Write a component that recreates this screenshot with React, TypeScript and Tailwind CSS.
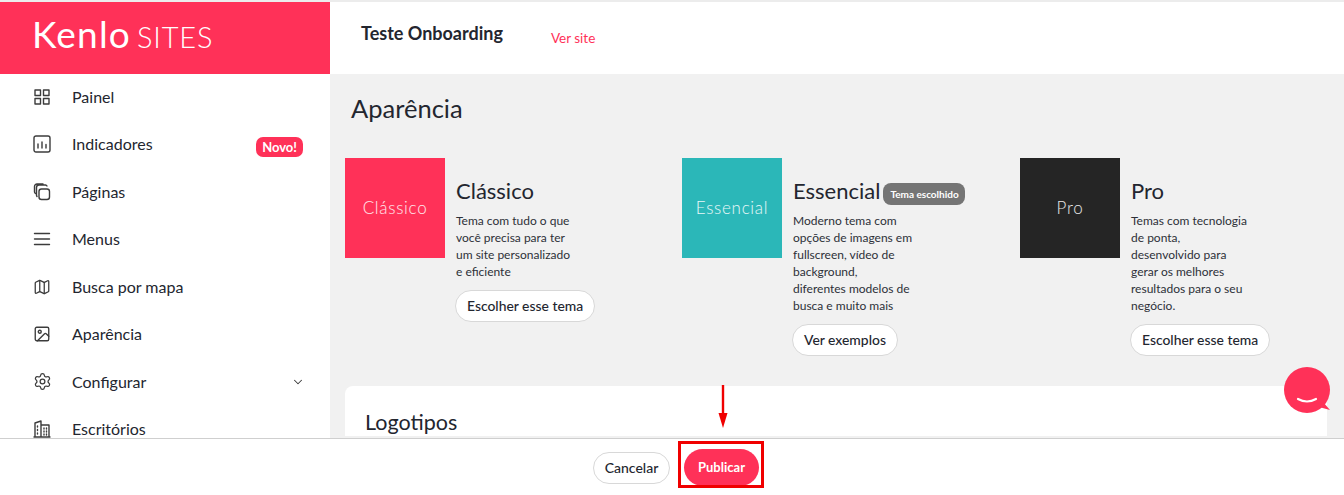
import React from "react";
import { ChevronDown, Image, Map, Settings } from "lucide-react";

const I = ({ children }: { children: React.ReactNode }) => (
  <svg width="18" height="18" viewBox="0 0 18 18" fill="none" stroke="#3c3c3c" strokeWidth="1.4" strokeLinecap="round" strokeLinejoin="round" className="shrink-0">
    {children}
  </svg>
);

const icons: Record<string, React.ReactNode> = {
  Painel: (
    <I>
      <rect x="2" y="2" width="5.5" height="5.5" />
      <rect x="10.5" y="2" width="5.5" height="5.5" />
      <rect x="2" y="10.5" width="5.5" height="5.5" />
      <rect x="10.5" y="10.5" width="5.5" height="5.5" />
    </I>
  ),
  Indicadores: (
    <I>
      <rect x="1" y="1" width="16" height="16" rx="2" />
      <path d="M5 9v4M9 7v6M13 9.5V13" />
    </I>
  ),
  "Páginas": (
    <I>
      <rect x="6" y="6" width="10.5" height="10.5" rx="2.5" />
      <path d="M4 13.5A2.5 2.5 0 0 1 3.5 12V4.5A2.5 2.5 0 0 1 6 2h6.5a2 2 0 0 1 1.5 1M2.5 10.5A2 2 0 0 1 1.5 9V3.5A2.5 2.5 0 0 1 4 1h6" />
    </I>
  ),
  Menus: (
    <I>
      <path d="M1.5 3.5h15M1.5 9h15M1.5 14.5h15" />
    </I>
  ),
};

const items = [
  { label: "Painel", icon: icons["Painel"] },
  { label: "Indicadores", icon: icons["Indicadores"], badge: true },
  { label: "Páginas", icon: icons["Páginas"] },
  { label: "Menus", icon: icons["Menus"] },
  { label: "Busca por mapa", icon: <Map size={18} strokeWidth={1.7} color="#3c3c3c" /> },
  { label: "Aparência", icon: <Image size={18} strokeWidth={1.8} color="#3c3c3c" /> },
  { label: "Configurar", icon: <Settings size={19} strokeWidth={1.6} color="#3c3c3c" />, chevron: true },
  {
    label: "Escritórios",
    icon: (
      <I>
        <path d="M2 17V3l6-2v16M8 5h8v12M1 17h16M4.5 6v1M4.5 9.5v1M4.5 13v1M11 8v1M13.5 8v1M11 11v1M13.5 11v1M11 14v1M13.5 14v1" />
      </I>
    ),
  },
];

const themes = [
  {
    name: "Clássico",
    color: "bg-[#ff3158]",
    lines: ["Tema com tudo o que", "você precisa para ter", "um site personalizado", "e eficiente"],
    action: "Escolher esse tema",
  },
  {
    name: "Essencial",
    color: "bg-[#2bb7b8]",
    chosen: true,
    lines: ["Moderno tema com", "opções de imagens em", "fullscreen, vídeo de", "background,", "diferentes modelos de", "busca e muito mais"],
    action: "Ver exemplos",
  },
  {
    name: "Pro",
    color: "bg-[#252525]",
    lines: ["Temas com tecnologia", "de ponta,", "desenvolvido para", "gerar os melhores", "resultados para o seu", "negócio."],
    action: "Escolher esse tema",
  },
];

export default function App() {
  return (
    <div className="relative flex h-[495px] w-[1344px] flex-col overflow-hidden bg-white pt-[2px] font-['Lato','Liberation_Sans',sans-serif] text-[#23262f]">
      <div className="absolute left-0 top-0 h-[2px] w-full bg-[#ececec]" />
      <div className="flex min-h-0 flex-1">
        <aside className="flex w-[330px] shrink-0 flex-col bg-white">
          <div className="flex h-[72px] shrink-0 items-baseline bg-[#ff3158] pl-[32px] pt-[13px] text-white">
            <span className="text-[37px] font-normal leading-none tracking-[1.2px]">Kenlo</span>
            <span className="ml-[6px] text-[29px] font-light leading-none tracking-[0.8px]">SITES</span>
          </div>
          <nav className="-mt-[1px] flex flex-col">
            {items.map((it) => (
              <div key={it.label} className="flex h-[47.5px] shrink-0 items-center pl-[33px] pr-[27px]">
                <span className="flex w-[39px] shrink-0">{it.icon}</span>
                <span className="flex-1 text-base">{it.label}</span>
                {it.badge && (
                  <span className="mt-[5px] rounded-[7px] bg-[#ff3158] px-[6px] py-[2px] text-[13px] font-bold leading-[16px] text-white">Novo!</span>
                )}
                {it.chevron && <ChevronDown size={14} strokeWidth={1.8} color="#3c3c3c" className="-mr-[2px]" />}
              </div>
            ))}
          </nav>
        </aside>
        <div className="flex min-w-0 flex-1 flex-col">
          <header className="flex h-[72px] shrink-0 items-start bg-white pl-[31px]">
            <span className="mt-[19px] text-lg font-bold leading-[24px]">Teste Onboarding</span>
            <a className="ml-[48px] mt-[26px] text-[13.5px] leading-[20px] text-[#ff3158]">Ver site</a>
          </header>
          <main className="min-h-0 flex-1 overflow-hidden bg-[#f1f1f1] pl-[15px] pr-[17px]">
            <h1 className="mt-[18px] pl-[6px] text-[25.5px] font-normal leading-[32px]">Aparência</h1>
            <div className="mt-[34px] grid grid-cols-[337px_338px_1fr]">
              {themes.map((t) => (
                <div key={t.name} className="flex items-start">
                  <div className={`flex h-[100px] w-[100px] shrink-0 items-center justify-center text-[17px] font-light tracking-[0.7px] text-white/90 ${t.color}`}>
                    {t.name}
                  </div>
                  <div className="ml-[11px] flex flex-col items-start">
                    <div className="mt-[19px] flex h-[28px] items-start">
                      <h2 className="text-[22px] font-normal leading-[28px]">{t.name}</h2>
                      {t.chosen && (
                        <span className="ml-[3px] mt-[6px] rounded-[8px] bg-[#757575] pl-[7px] pr-[6px] py-[3px] text-[10px] font-bold leading-[16px] text-white">Tema escolhido</span>
                      )}
                    </div>
                    <p className="mt-[7px] text-xs leading-[17px] text-[#2d3038]">
                      {t.lines.map((l) => (
                        <span key={l} className="block">{l}</span>
                      ))}
                    </p>
                    <button className="-ml-[1px] mt-[10px] h-[32px] rounded-full border border-[#d8d8d8] bg-white px-[11px] text-[13.9px] font-medium leading-none text-[#23262f]">
                      {t.action}
                    </button>
                  </div>
                </div>
              ))}
            </div>
            <section className="mt-[30px] rounded-t-[8px] bg-white px-[20px] pt-[22px]">
              <h2 className="text-[21.5px] font-normal leading-[28px]">Logotipos</h2>
            </section>
          </main>
        </div>
      </div>
      <footer className="flex h-[57px] shrink-0 items-center justify-center gap-[14px] border-t border-[#cfcfcf] bg-white pl-[8px] pt-[1px]">
        <button className="h-[32px] w-[77px] rounded-full border border-[#d8d8d8] bg-white text-sm font-medium text-[#23262f]">Cancelar</button>
        <button className="h-[37px] w-[75px] rounded-full bg-[#ff3158] text-[13px] font-bold text-white">Publicar</button>
      </footer>

      <div className="absolute left-[678px] top-[441px] h-[47px] w-[86px] border-[3px] border-[#f00000]" />
      <svg className="absolute left-[717px] top-[385px]" width="12" height="44" viewBox="0 0 12 44">
        <path d="M6 0v32" stroke="#f00000" strokeWidth="2.4" />
        <path d="M1.5 28h9L6 43z" fill="#f00000" />
      </svg>
      <svg className="absolute left-[1284px] top-[367px]" width="48" height="48" viewBox="0 0 48 48">
        <path d="M23 0a23 23 0 1 1 0 46 23 23 0 0 1 0-46z" fill="#ff3158" />
        <path d="M35 40l11 3-7-8z" fill="#ff3158" />
        <path d="M14 32q9 5 18 0" fill="none" stroke="#fff" strokeWidth="2.2" strokeLinecap="round" />
      </svg>
    </div>
  );
}
